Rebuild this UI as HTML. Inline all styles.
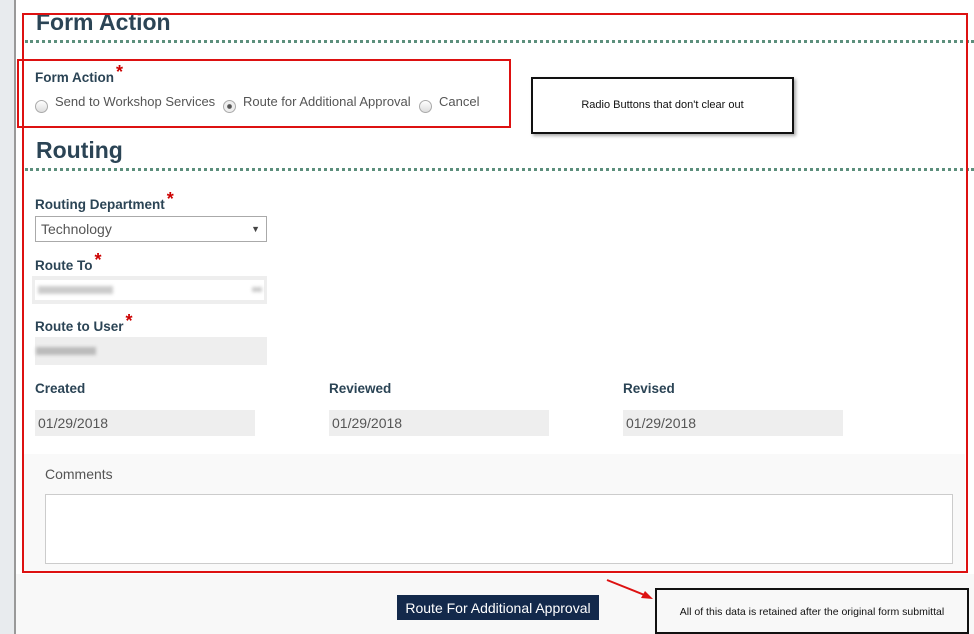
<!DOCTYPE html>
<html><head><style>
body{margin:0;width:974px;height:634px;overflow:hidden;background:#fff;font-family:"Liberation Sans",Arial,sans-serif;position:relative}
.a{position:absolute}
.h{font-weight:bold;color:#2b4455;font-size:23px}
.dot{height:0;border-top:3px dotted #5c8f7c;left:25px;right:0}
.lb{font-weight:bold;color:#2b4455;font-size:13.5px}
.lb i{color:#c00;font-style:normal;font-size:18px;position:relative;top:-4px;margin-left:2px}
.t{font-size:13px;color:#555}
.rad{width:11px;height:11px;border-radius:50%;border:1px solid #aaa;background:linear-gradient(#fff,#ddd)}
.in{background:#eee;font-size:14px;color:#555;padding-left:3px;box-sizing:border-box;line-height:26px}
.bl{position:absolute;height:8px;background:#ccc;filter:blur(1.5px)}
</style></head><body>
<div class="a" style="left:0;top:0;width:14px;height:634px;background:#e8ebee"></div>
<div class="a" style="left:14px;top:0;width:2px;height:634px;background:#999"></div>
<div class="a" style="left:16px;top:574px;width:958px;height:60px;background:#f8f8f8"></div>
<div class="a h" style="left:36px;top:9px">Form Action</div>
<div class="a dot" style="top:40px"></div>
<div class="a lb" style="left:35px;top:66px">Form Action<i>*</i></div>
<div class="a rad" style="left:35px;top:100px"></div>
<div class="a t" style="left:55px;top:94px">Send to Workshop Services</div>
<div class="a rad" style="left:223px;top:100px;background:radial-gradient(#555 25%,#eee 35%)"></div>
<div class="a t" style="left:243px;top:94px">Route for Additional Approval</div>
<div class="a rad" style="left:419px;top:100px"></div>
<div class="a t" style="left:439px;top:94px">Cancel</div>
<div class="a" style="left:17px;top:59px;width:490px;height:65px;border:2px solid #d11"></div>
<div class="a" style="left:531px;top:77px;width:259px;height:53px;border:2px solid #111;box-shadow:2px 2px 3px #aaa;font-size:11px;text-align:center;line-height:53px;color:#111">Radio Buttons that don't clear out</div>
<div class="a h" style="left:36px;top:137px">Routing</div>
<div class="a dot" style="top:168px"></div>
<div class="a lb" style="left:35px;top:193px">Routing Department<i>*</i></div>
<div class="a" style="left:35px;top:216px;font-size:14px;color:#555;line-height:24px;padding-left:5px;box-sizing:border-box;width:232px;height:26px;border:1px solid #aaa">Technology<span style="position:absolute;right:6px;font-size:9px;color:#444">▼</span></div>
<div class="a lb" style="left:35px;top:254px">Route To<i>*</i></div>
<div class="a" style="left:32px;top:276px;width:235px;height:28px;background:#eee"><div style="margin:4px 3px;height:20px;background:#fff"></div></div>
<div class="bl" style="left:38px;top:286px;width:75px"></div>
<div class="bl" style="left:252px;top:287px;width:10px;height:5px"></div>
<div class="a lb" style="left:35px;top:315px">Route to User<i>*</i></div>
<div class="a in" style="left:35px;top:337px;width:232px;height:28px"></div>
<div class="bl" style="left:36px;top:347px;width:60px;background:#bbb"></div>
<div class="a lb" style="left:35px;top:381px">Created</div>
<div class="a lb" style="left:329px;top:381px">Reviewed</div>
<div class="a lb" style="left:623px;top:381px">Revised</div>
<div class="a in" style="left:35px;top:410px;width:220px;height:26px">01/29/2018</div>
<div class="a in" style="left:329px;top:410px;width:220px;height:26px">01/29/2018</div>
<div class="a in" style="left:623px;top:410px;width:220px;height:26px">01/29/2018</div>
<div class="a" style="left:24px;top:454px;width:941px;height:117px;background:#f9f9f9"></div>
<div class="a t" style="left:45px;top:466px;font-size:14px">Comments</div>
<div class="a" style="left:45px;top:494px;width:906px;height:68px;border:1px solid #ccc;background:#fff"></div>
<div class="a" style="left:22px;top:13px;width:942px;height:556px;border:2px solid #d11"></div>
<svg class="a" style="left:605px;top:578px" width="50" height="24"><line x1="2" y1="2" x2="42" y2="18" stroke="#d11" stroke-width="2"/><polygon points="48,21 36,20 40,13" fill="#d11"/></svg>
<div class="a" style="left:397px;top:595px;width:202px;height:25px;background:#13294b;color:#fff;font-size:14px;text-align:center;line-height:27px">Route For Additional Approval</div>
<div class="a" style="left:655px;top:588px;width:310px;height:42px;border:2px solid #111;font-size:10.5px;text-align:center;line-height:44px;color:#111">All of this data is retained after the original form submittal</div>
</body></html>
